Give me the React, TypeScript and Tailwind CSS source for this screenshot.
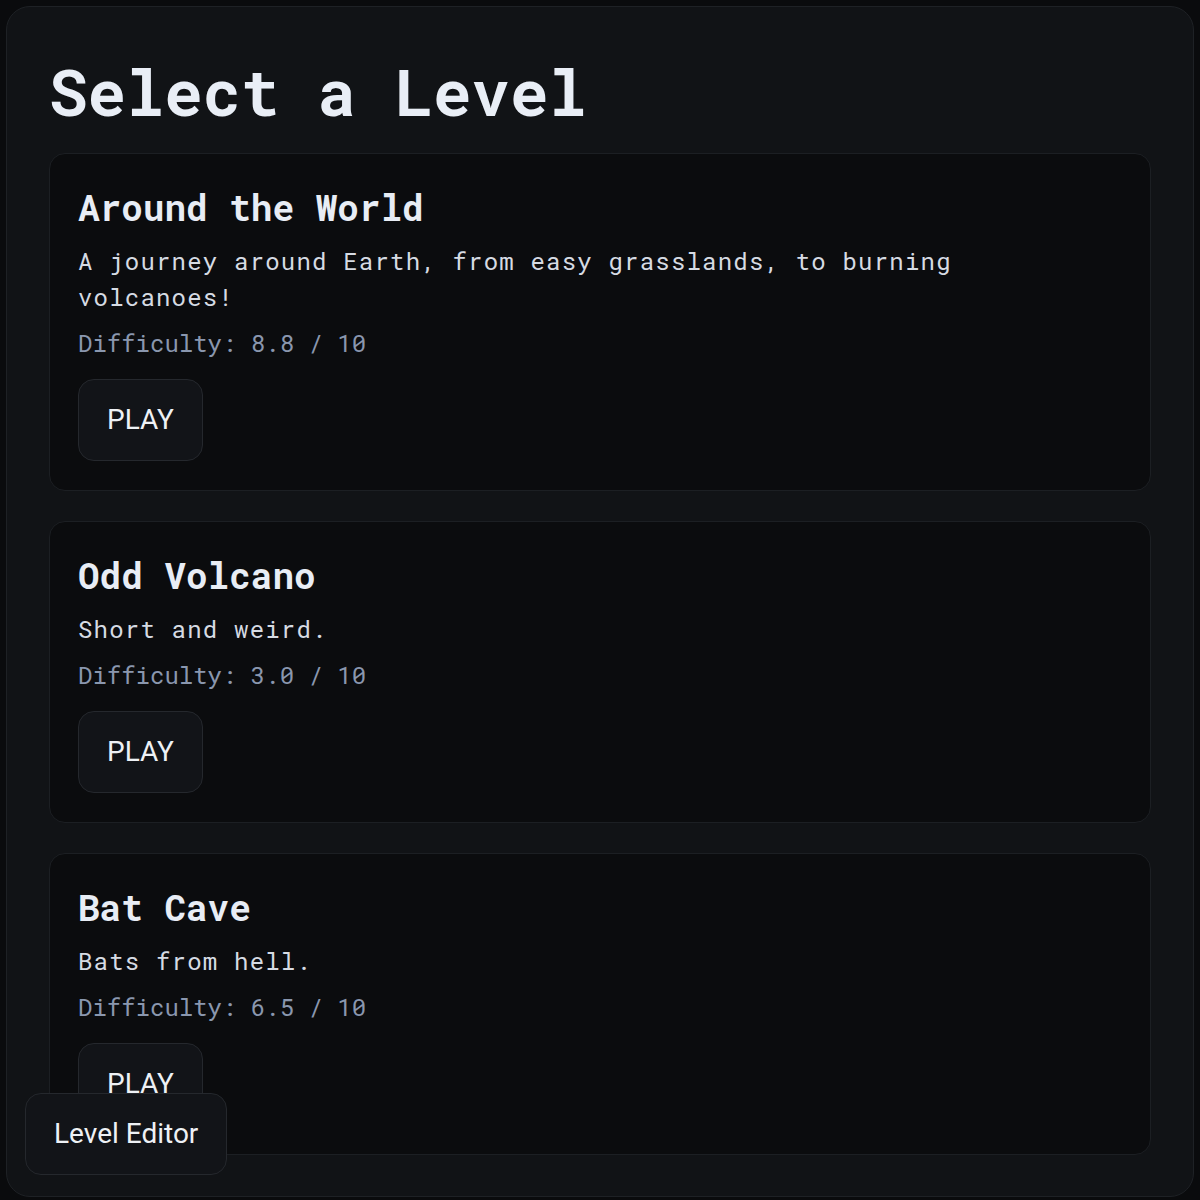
const levels = [
  {
    name: "Around the World",
    desc: "A journey around Earth, from easy grasslands, to burning volcanoes!",
    difficulty: "8.8",
  },
  { name: "Odd Volcano", desc: "Short and weird.", difficulty: "3.0" },
  { name: "Bat Cave", desc: "Bats from hell.", difficulty: "6.5" },
];

const mono = "font-['Roboto_Mono','DejaVu_Sans_Mono','Liberation_Mono',monospace]";
const sans = "font-['Roboto','Noto_Sans',sans-serif]";

const App = () => {
  return (
    <div className="min-h-screen bg-[#0a0b0d] p-[6px]">
      <div className="rounded-[24px] border border-[#1e2125] bg-[#111316] px-[42px] pt-[46px] pb-[41px]">
        {/* Header */}
        <h1 className={`${mono} mb-[23px] text-[64px] font-bold leading-[77px] text-[#e9eef6]`}>
          Select a Level
        </h1>

        {/* Level cards */}
        <div className="flex flex-col gap-[30px]">
          {levels.map((lvl) => (
            <div
              key={lvl.name}
              className="rounded-2xl border border-[#1c1f23] bg-[#0b0c0e] px-7 pt-7 pb-[29px]"
            >
              <h2 className={`${mono} text-[36px] font-bold leading-[50px] text-[#e8edf5]`}>
                {lvl.name}
              </h2>
              <p
                className={`${mono} mt-[11px] max-w-[1030px] text-[24px] leading-[36px] tracking-[0.05em] text-[#d6dbe3]`}
              >
                {lvl.desc}
              </p>
              <p className={`${mono} mt-[10px] text-[24px] leading-[36px] text-[#8a97ae]`}>
                Difficulty: {lvl.difficulty} / 10
              </p>
              <button
                className={`${sans} mt-[18px] h-[82px] rounded-2xl border border-[#25282d] bg-[#121418] px-[28px] text-[28px] text-[#eef1f5]`}
              >
                PLAY
              </button>
            </div>
          ))}
        </div>
      </div>

      {/* Floating editor button */}
      <button
        className={`${sans} fixed bottom-[25px] left-[25px] h-[82px] rounded-2xl border border-[#25282d] bg-[#121418] px-[28px] text-[28px] text-[#eef1f5]`}
      >
        Level Editor
      </button>
    </div>
  );
};

export default App;
